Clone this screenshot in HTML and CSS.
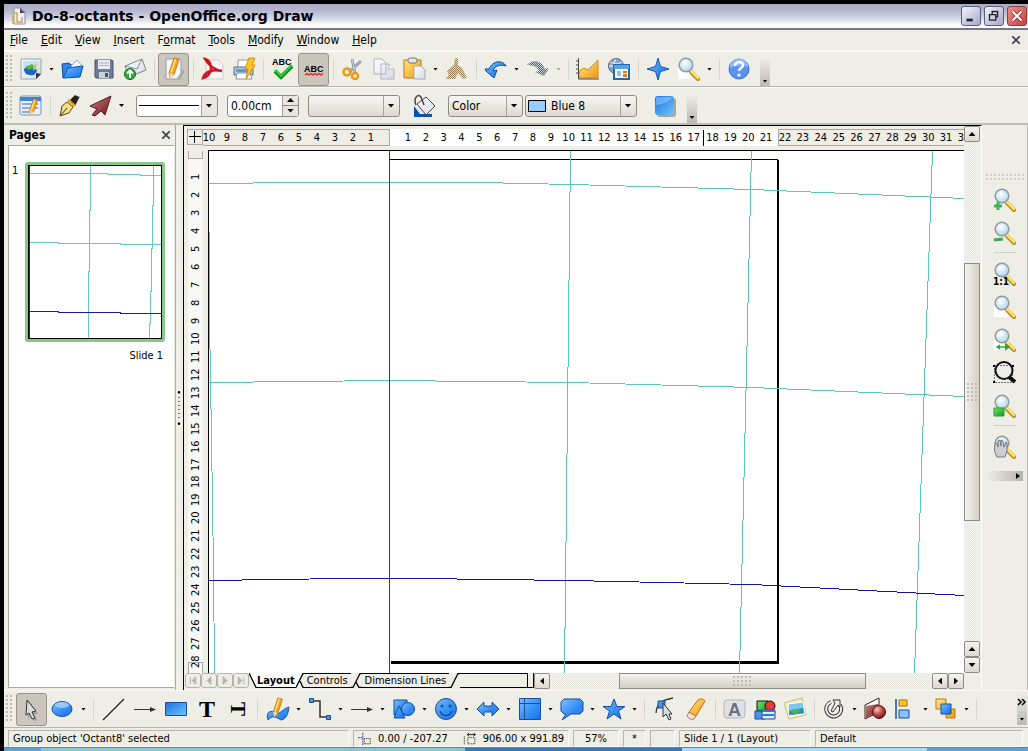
FILE: index.html
```html
<!DOCTYPE html>
<html lang="en">
<head>
<meta charset="utf-8">
<title>Do-8-octants - OpenOffice.org Draw</title>
<link rel="stylesheet" href="styles.css">
</head>
<body>
<svg class="defs" aria-hidden="true">
  <defs>
    <linearGradient id="blue" x1="0" y1="0" x2="1" y2="1"><stop offset="0" stop-color="#7fc0ff"/><stop offset=".5" stop-color="#3b93f7"/><stop offset="1" stop-color="#1570e8"/></linearGradient>
    <linearGradient id="rect" x1="0" y1="0" x2="1" y2="1"><stop offset="0" stop-color="#1f6fe0"/><stop offset="1" stop-color="#6fc6ff"/></linearGradient>
    <linearGradient id="gold" x1="0" y1="0" x2="1" y2="1"><stop offset="0" stop-color="#ffe680"/><stop offset="1" stop-color="#f09a10"/></linearGradient>
    <linearGradient id="paper" x1="0" y1="0" x2="1" y2="1"><stop offset="0" stop-color="#ffffff"/><stop offset="1" stop-color="#d6dae6"/></linearGradient>
    <linearGradient id="green" x1="0" y1="0" x2="1" y2="1"><stop offset="0" stop-color="#7be36f"/><stop offset="1" stop-color="#0b9a1a"/></linearGradient>
    <linearGradient id="red" x1="0" y1="0" x2="1" y2="1"><stop offset="0" stop-color="#c88080"/><stop offset="1" stop-color="#6e1414"/></linearGradient>
    <radialGradient id="lens" cx=".4" cy=".35" r=".7"><stop offset="0" stop-color="#ffffff"/><stop offset="1" stop-color="#a9d3e6"/></radialGradient>
    <radialGradient id="ball" cx=".35" cy=".3" r=".8"><stop offset="0" stop-color="#ffc4c4"/><stop offset=".5" stop-color="#c04a4a"/><stop offset="1" stop-color="#5e1010"/></radialGradient>
    <pattern id="dimBrown" width="2" height="2" patternUnits="userSpaceOnUse"><path fill="#9a7f55" d="M0 0h1v1H0zM1 1h1v1H1z"/></pattern>
    <pattern id="dimBlue" width="2" height="2" patternUnits="userSpaceOnUse"><path fill="#34688f" d="M0 0h1v1H0zM1 1h1v1H1z"/></pattern>
    <symbol id="mag" viewBox="0 0 24 24">
      <path d="M14 15l7 7" stroke="#b98a20" stroke-width="4" stroke-linecap="round"/><path d="M14 14l7 7" stroke="#ffe069" stroke-width="2.500" stroke-linecap="round"/>
      <circle cx="9" cy="8" r="6.800" fill="url(#lens)" stroke="#8d9ba3" stroke-width="1.500"/>
    </symbol>
    <symbol id="pencil" viewBox="0 0 24 24"><path d="M9 16L14 1l5 1.500-5 15-4 3.500z" fill="#f9a51c" stroke="#b56a08" stroke-width=".8"/><path d="M11 15.500L15.500 2" stroke="#ffe48c" stroke-width="1.500"/><path d="M9 16l5 1.500-4 4.500z" fill="#f4d6a6"/></symbol>
  </defs>
</svg>
<div class="app">
  <header class="title">
    <svg class="doc-icon" viewBox="0 0 18 18"><path d="M5 1h7l4 4v12H5z" fill="#eef0f4" stroke="#8c93a8"/><path d="M11 1l5 5h-5z" fill="#445"/><path d="M2 6h6v9h5v-5M4 9v8" fill="none" stroke="#d4a84b" stroke-width="1.500"/></svg>
    <h1>Do-8-octants - OpenOffice.org Draw</h1>
    <button class="wb" aria-label="Minimize"><svg viewBox="0 0 20 20"><path d="M5 13h7v3H5z" fill="#223"/></svg></button>
    <button class="wb" aria-label="Restore"><svg viewBox="0 0 20 20"><path d="M8 8V5h6v6h-2M5 8.500h7v6H5z" fill="none" stroke="#223" stroke-width="1.500"/></svg></button>
    <button class="wb close" aria-label="Close"><svg viewBox="0 0 20 20"><path d="M5 5l10 10M15 5L5 15" stroke="#733" stroke-width="4"/><path d="M5 5l10 10M15 5L5 15" stroke="#fff" stroke-width="2.200"/></svg></button>
  </header>
  <nav class="menu">
    <button><u>F</u>ile</button><button><u>E</u>dit</button><button><u>V</u>iew</button><button><u>I</u>nsert</button><button>F<u>o</u>rmat</button><button><u>T</u>ools</button><button><u>M</u>odify</button><button><u>W</u>indow</button><button><u>H</u>elp</button>
    <button class="x" aria-label="Close document"><svg viewBox="0 0 8 8"><path d="M0 0l8 8M8 0L0 8" stroke="#446" stroke-width="1.800"/></svg></button>
  </nav>
  <div class="bar">
    <i class="grip"></i>
    <button class="tb" aria-label="New"><svg viewBox="0 0 24 24"><path d="M2 2h20v15l-5 5H2z" fill="url(#paper)" stroke="#9ba0ad"/><path d="M4 4h16v10H4z" fill="#c4e2f7"/><path d="M5 12c3-3 9-2 13 1-1 4-3 6-7 5-4 0-6-3-6-6z" fill="#1766c4"/><path d="M6 10l7-3 3 3-6 3z" fill="#5bb440"/><path d="M14 10l4-4-1 5-3 3z" fill="#f4b824"/><path d="M17 22l5-5-5-1z" fill="#333"/></svg></button>
    <button class="dd" aria-label="New options"></button>
    <button class="tb" aria-label="Open"><svg viewBox="0 0 24 24"><path d="M2 21L1 7l7-1 2 2h10l1 4" fill="#3585e6" stroke="#0c4fa8"/><path d="M10 9l6-6 6 7-8 8z" fill="#f3f8ff" stroke="#8da5c8"/><path d="M2 21l5-10 15-2-3 11z" fill="url(#blue)" stroke="#0c4fa8"/></svg></button>
    <button class="tb" aria-label="Save"><svg viewBox="0 0 24 24"><path d="M3 3h17l1 1v17H4l-1-1z" fill="#6e7b95" stroke="#465168"/><path d="M6 3h12v9H6z" fill="#e8ebf3"/><path d="M7 6h10M7 8.500h10" stroke="#a9b1c4"/><path d="M7 15h10v6H7z" fill="#c9cfdb"/><path d="M13 16h3v4h-3z" fill="#465168"/></svg></button>
    <button class="tb" aria-label="E-mail"><svg viewBox="0 0 24 24"><path d="M2 9l17-7 4 11-17 7z" fill="url(#paper)" stroke="#7d8292"/><path d="M2 9l12 3 5-10" fill="none" stroke="#8a90a2"/><circle cx="7" cy="17" r="5.500" fill="#2fae36" stroke="#0c7614"/><path d="M7 21v-7M4 16.500l3-3 3 3" fill="none" stroke="#fff" stroke-width="2"/></svg></button>
    <i class="sep"></i>
    <button class="tb on" aria-label="Edit file"><svg viewBox="0 0 24 24"><path d="M4 2h15v20H4z" fill="#f4f5fa" stroke="#9499aa"/><path d="M15 21l7-9v4l-5 6z" fill="#a9a49d"/><use href="#pencil" x="-2" width="24" height="24"/></svg></button>
    <i class="sep"></i>
    <button class="tb" aria-label="Export PDF"><svg viewBox="0 0 24 24"><path d="M5 3h12l5 5v14H5z" fill="#f8f5f5" stroke="#d5c9c9"/><path d="M4 2c5 1 6 7 6 11-1 4-4 7-8 8 2-6 8-9 19-7-6-1-13-5-17-12z" fill="none" stroke="#d3131c" stroke-width="2.500"/></svg></button>
    <button class="tb" aria-label="Print"><svg viewBox="0 0 24 24"><path d="M6 3h11v8H6z" fill="#fff" stroke="#8c93a3"/><path d="M2 10h19v8H2z" fill="#b9c8dd" stroke="#5d6f8c"/><path d="M4 12h13v3H4z" fill="#3fa6e6"/><path d="M5 16h13l2 6H4z" fill="#fff" stroke="#8c93a3"/><path d="M17 1h6l-3 7h3l-9 14 2-10h-3z" fill="#ffc62a" stroke="#e08c00"/></svg></button>
    <i class="sep"></i>
    <button class="tb" aria-label="Spellcheck"><svg viewBox="0 0 24 24"><text class="abc" x="1" y="8">ABC</text><path d="M4 14l6 6L21 9" fill="none" stroke="#078a14" stroke-width="4"/><path d="M4 13l6 6L21 8" fill="none" stroke="#33cc3c" stroke-width="2"/></svg></button>
    <button class="tb on" aria-label="AutoSpellcheck"><svg viewBox="0 0 24 24"><text class="abc" x="2" y="15">ABC</text><path d="M3 18l2-1.500 2 1.500 2-1.500 2 1.500 2-1.500 2 1.500 2-1.500 2 1.500 2-1.500" fill="none" stroke="#e01818" stroke-width="1.200"/></svg></button>
    <i class="sep"></i>
    <button class="tb" aria-label="Cut"><svg viewBox="0 0 24 24"><path d="M11 2l3 14M20 4L8 15" stroke="#7c8698" stroke-width="2.500"/><path d="M11 2l3 14M20 4L8 15" stroke="#d5dbe6"/><circle cx="6" cy="15" r="3.500" fill="none" stroke="#e89a10" stroke-width="2.500"/><circle cx="14" cy="19" r="3" fill="none" stroke="#e89a10" stroke-width="2.500"/></svg></button>
    <button class="tb" aria-label="Copy"><svg viewBox="0 0 24 24"><path d="M2 2h8l4 4v11H2zM9 7h8l5 5v10H9z" fill="url(#paper)" stroke="#b0b4c0"/><path d="M17 7v5h5" fill="#fff" stroke="#b0b4c0"/></svg></button>
    <button class="tb" aria-label="Paste"><svg viewBox="0 0 24 24"><path d="M1 3h17v18H1z" fill="url(#gold)" stroke="#b97a10"/><rect x="5" y="1" width="9" height="5" rx="2" fill="#e5e5ea" stroke="#777"/><path d="M11 9h7l4 4v9H11z" fill="url(#paper)" stroke="#a2a7b8"/></svg></button>
    <button class="dd" aria-label="Paste options"></button>
    <button class="tb" aria-label="Format paintbrush"><svg viewBox="0 0 24 24"><path d="M10 1h3v7l4 3 5 10-4 1-5-6-3 6H1l3-5-2-3 7-6z" fill="#dfd6c6"/><path d="M10 1h3v7l4 3 5 10-4 1-5-6-3 6H1l3-5-2-3 7-6z" fill="url(#dimBrown)"/></svg></button>
    <i class="sep"></i>
    <button class="tb" aria-label="Undo"><svg viewBox="0 0 24 24"><path d="M1 12l1 2 8 7 3-8-4 1c1-5 7-7 13-5C19 3 9 3 5 12z" fill="url(#blue)" stroke="#0b4b9c"/></svg></button>
    <button class="dd" aria-label="Undo list"></button>
    <button class="tb" aria-label="Redo"><svg viewBox="0 0 24 24"><path d="M23 11l-5 8-9-4 4-1c-1-4-6-6-12-6C6 2 15 3 19 12z" fill="#c8d6de"/><path d="M23 11l-5 8-9-4 4-1c-1-4-6-6-12-6C6 2 15 3 19 12z" fill="url(#dimBlue)"/></svg></button>
    <button class="dd dim" aria-label="Redo list"></button>
    <i class="sep"></i>
    <button class="tb" aria-label="Chart"><svg viewBox="0 0 24 24"><path d="M3 21v-7l5-3 4 2L22 3v18z" fill="url(#gold)" stroke="#d98a10"/><path d="M2.500 1v21H23M0 4h3M0 8h3M0 12h3M0 16h3" fill="none" stroke="#4b4b4b"/></svg></button>
    <button class="tb" aria-label="Hyperlink"><svg viewBox="0 0 24 24"><circle cx="9" cy="9" r="7.500" fill="#8ea2bf" stroke="#4f6284"/><path d="M2 9h14M9 2c-4 5-4 9 0 14M3 5c4 2 9 2 12 0" fill="none" stroke="#d6dfec" stroke-width="1.300"/><path d="M7 8h15v14H7z" fill="#fff" stroke="#1f66b8" stroke-width="2"/><path d="M7 8h15v4H7z" fill="#53a4f0"/><path d="M10 14h4v5h-4z" fill="#8fc1ee"/><path d="M16 14h4v2h-4zM16 17h4v3h-4z" fill="#e87722"/></svg></button>
    <i class="sep"></i>
    <button class="tb" aria-label="Navigator"><svg viewBox="0 0 24 24"><path d="M12 1l2.500 8.500L23 12l-8.500 2.500L12 23l-2.500-8.500L1 12l8.500-2.500z" fill="url(#blue)" stroke="#1458a8"/></svg></button>
    <button class="tb" aria-label="Zoom"><svg viewBox="0 0 24 24"><path d="M1 12h13v10H1z" fill="#fbfbfb"/><use href="#mag" width="24" height="24"/></svg></button>
    <button class="dd" aria-label="Zoom options"></button>
    <i class="sep"></i>
    <button class="tb" aria-label="Help"><svg viewBox="0 0 24 24"><circle cx="12" cy="12" r="10" fill="#5b93f2" stroke="#3c6fd2"/><path d="M3 11a9 9 0 0 1 18-1c-5-2-12-2-18 1z" fill="#94bcfa"/><path d="M8 9c0-5 8-5 8-1 0 3-4 3-4 6" fill="none" stroke="#fff" stroke-width="2.500"/><circle cx="12" cy="18" r="1.600" fill="#fff"/></svg></button>
    <button class="more" aria-label="More"></button>
  </div>
  <div class="bar two">
    <i class="grip"></i>
    <button class="tb" aria-label="Styles"><svg viewBox="0 0 24 24"><rect x="1" y="2" width="21" height="19" rx="2" fill="#e9eef8" stroke="#8091b0"/><path d="M1 3h21v4H1z" fill="#3b84dc"/><path d="M3 10h16M3 14h16M3 18h9" stroke="#8badde" stroke-width="2"/><use href="#pencil" x="3" y="4" width="20" height="19"/></svg></button>
    <i class="sep"></i>
    <button class="tb" aria-label="Line"><svg viewBox="0 0 24 24"><path d="M12 6l5-5 4 2 1-1-5 10z" fill="#222"/><path d="M2 22l2-10 5-4 6 5-4 6z" fill="#f7dc80" stroke="#5d4a18"/><path d="M3 21l6-7" stroke="#333"/><path d="M10 6l7 6" stroke="#e2a718" stroke-width="2.500"/></svg></button>
    <button class="tb" aria-label="Arrow style"><svg viewBox="0 0 24 24"><path d="M22 2L1 12l7 3-5 6 3 1 6-5 4 4z" fill="url(#red)" stroke="#5d1b1b"/></svg></button>
    <button class="dd" aria-label="Arrow styles"></button>
    <div class="combo line"><span class="stroke"></span><select aria-label="Line style"><option></option></select></div>
    <div class="spin"><input type="text" value="0.00cm" aria-label="Line width"><div><button aria-label="Increase"></button><button class="down" aria-label="Decrease"></button></div></div>
    <div class="combo lcolor"><select aria-label="Line color"><option></option></select></div>
    <button class="tb bucket" aria-label="Area"><svg viewBox="0 0 24 24"><path d="M1 12v11h18v-3H7z" fill="#0d50b8"/><path d="M4 10l9-7 9 9-9 9z" fill="url(#paper)" stroke="#444"/><path d="M3 11C0 4 5-1 8 3l3 8" fill="none" stroke="#444" stroke-width="1.500"/></svg></button>
    <div class="combo fill"><select aria-label="Fill type"><option>Color</option></select></div>
    <div class="combo fcolor"><span class="swatch"></span><select aria-label="Fill color"><option>Blue 8</option></select></div>
    <button class="tb shadow" aria-label="Shadow"><svg viewBox="0 0 24 24"><rect x="4" y="4" width="19" height="19" rx="3" fill="#aaa69e"/><rect x="2" y="2" width="19" height="19" rx="3" fill="url(#rect)"/><path d="M3 3h16c-3 5-8 7-16 8z" fill="#8fc8ff" opacity=".6"/></svg></button>
    <button class="more second" aria-label="More"></button>
  </div>
  <main>
    <aside class="pages">
      <header><h2>Pages</h2><button class="x" aria-label="Close pages"><svg viewBox="0 0 8 8"><path d="M0 0l8 8M8 0L0 8" stroke="#445" stroke-width="1.800"/></svg></button></header>
      <div class="list">
        <span>1</span>
        <figure>
          <svg class="thumb" viewBox="0 0 134 174" preserveAspectRatio="none" shape-rendering="crispEdges" fill="none"><rect width="134" height="174" fill="#fff"/><g stroke="#66c8c0"><path d="M0 8.500h79v1h33v1h22M0 77.500h30v1h62v1h42M62.500 0v45h-1v61h-1v68M125.500 0v40h-1v43h-1v43h-1v32h-1v16"/></g><path d="M0 146.500h30v1h62v1h42" stroke="#1c1c9c"/><path d="M1.500 0v174" stroke="#402050"/></svg>
          <figcaption>Slide 1</figcaption>
        </figure>
      </div>
    </aside>
    <div class="split"><svg viewBox="0 0 4 36"><path d="M1 3l1-2 1 2zM1 33l1 2 1-2z" fill="#000" stroke="#000"/><path d="M2 7v24" stroke="#000" stroke-dasharray="1 3"/></svg></div>
    <section class="doc">
      <div class="corner"><svg viewBox="0 0 14 14"><path d="M1 6.500h12M6.500 1v12" stroke="#000"/></svg></div>
      <div class="hruler">
        <div class="neg"><span>10</span><span>9</span><span>8</span><span>7</span><span>6</span><span>5</span><span>4</span><span>3</span><span>2</span><span>1</span></div>
        <div class="pos"><span>1</span><span>2</span><span>3</span><span>4</span><span>5</span><span>6</span><span>7</span><span>8</span><span>9</span><span>10</span><span>11</span><span>12</span><span>13</span><span>14</span><span>15</span><span>16</span><span>17</span><span class="mark">18</span><span>19</span><span>20</span><span>21</span></div>
        <div class="beyond"><span>22</span><span>23</span><span>24</span><span>25</span><span>26</span><span>27</span><span>28</span><span>29</span><span>30</span><span>31</span><span>32</span></div>
      </div>
      <div class="vruler">
        <i></i>
        <div><span>1</span><span>2</span><span>3</span><span>4</span><span>5</span><span>6</span><span>7</span><span>8</span><span>9</span><span>10</span><span>11</span><span>12</span><span>13</span><span>14</span><span>15</span><span>16</span><span>17</span><span>18</span><span>19</span><span>20</span><span>21</span><span>22</span><span>23</span><span>24</span><span>25</span><span>26</span><span>27</span><span>28</span></div>
      </div>
      <div class="canvas">
        <svg shape-rendering="crispEdges" fill="none" aria-label="Drawing page">
          <path d="M181 8.500h388" stroke="#000"/><path d="M569 9v503" stroke="#000" stroke-width="2"/><path d="M182 511h388" stroke="#000" stroke-width="3"/>
          <g stroke="#5cc6be"><path d="M0 32.500L90 31.500H271L362 33.500 543 38.500 755 47.500M0 231.500L90 230.500 181 229.500 271 230.500 362 231.500 543 236.500 755 245.500M361.500 0L355.500 522M542.500 0L530.500 522M723.500 0L705.500 522M.5 81v86l2 120 2 130 1 105"/></g>
          <path d="M0 429.500L135 427.500H210L362 429.500 543 433.500 755 444.500" stroke="#14149a"/>
          <path d="M180.500 0v522" stroke="#562a68"/>
        </svg>
      </div>
      <div class="vscroll"><button class="sb up" aria-label="Scroll up"></button><div class="track"><div class="knob"></div></div><button class="sb up" aria-label="Previous page"></button><button class="sb down" aria-label="Scroll down"></button></div>
      <div class="tabs">
        <button class="nav" aria-label="First"><svg viewBox="0 0 14 14"><path d="M4 3v8M10 3v8L6 7z"/></svg></button><button class="nav" aria-label="Previous"><svg viewBox="0 0 14 14"><path d="M9 3v8L5 7z"/></svg></button><button class="nav" aria-label="Next"><svg viewBox="0 0 14 14"><path d="M5 3v8l4-4z"/></svg></button><button class="nav" aria-label="Last"><svg viewBox="0 0 14 14"><path d="M4 3v8l4-4zM10 3v8"/></svg></button>
        <svg class="slant" viewBox="0 0 8 15"><path d="M0 0h8v15z" fill="#fff"/><path d="M0 0l7 14.500h1" fill="none" stroke="#000" stroke-width="1.300"/></svg>
        <button class="tab active">Layout</button>
        <svg class="slant" viewBox="0 0 8 15"><path d="M0 0h7L0 15z" fill="#fff"/><path d="M0 14.500L7 .5h1M4 8l3 6.500h1" fill="none" stroke="#000" stroke-width="1.300"/></svg>
        <button class="tab">Controls</button>
        <svg class="slant wide" viewBox="0 0 11 15"><path d="M0 14.500h2L9 .5h2M5 9l3 5.500h3" fill="none" stroke="#000" stroke-width="1.300"/></svg>
        <button class="tab">Dimension Lines</button>
        <svg class="slant wide" viewBox="0 0 11 15"><path d="M0 14.500h2L9 .5h2" fill="none" stroke="#000" stroke-width="1.300"/></svg>
        <i class="rest"></i><i class="handle"></i>
        <button class="sb left" aria-label="Scroll left"></button>
        <div class="track"><div class="knob"></div></div>
        <button class="sb left" aria-label="Scroll left"></button><button class="sb right" aria-label="Scroll right"></button>
      </div>
    </section>
    <div class="side">
      <i class="hgrip"></i>
      <button aria-label="Zoom in"><svg viewBox="0 0 24 24"><use href="#mag" width="24" height="24"/><path d="M5 14v8M1 18h8" stroke="#42b653" stroke-width="3"/></svg></button>
      <button aria-label="Zoom out"><svg viewBox="0 0 24 24"><use href="#mag" width="24" height="24"/><path d="M1 19l9-1" stroke="#42a353" stroke-width="3"/></svg></button>
      <hr>
      <button aria-label="Zoom 100%"><svg viewBox="0 0 24 24"><use href="#mag" width="24" height="24"/><text class="one" x="0" y="23">1:1</text></svg></button>
      <button aria-label="Entire page"><svg viewBox="0 0 24 24"><path d="M1 10h14v12H1z" fill="#fff"/><use href="#mag" width="24" height="24"/></svg></button>
      <button aria-label="Page width"><svg viewBox="0 0 24 24"><path d="M1 12h14v10H1z" fill="#fff"/><use href="#mag" width="24" height="24"/><path d="M4 19h11M7 17l-3 2 3 2M12 16l4 3-4 3" fill="#28ad31" stroke="#28ad31" stroke-width="1.500"/></svg></button>
      <button aria-label="Zoom selection"><svg viewBox="0 0 24 24"><path d="M16 16l6 5" stroke="#111" stroke-width="4"/><circle cx="11" cy="9.500" r="8.500" fill="#ececec" stroke="#111" stroke-width="2"/><path d="M1.500 4.500h18v17h-18z" fill="none" stroke="#000" stroke-dasharray="1 2"/><path d="M0 4h2v2H0zM19 4h2v2h-2zM0 20h2v2H0z" fill="#000"/></svg></button>
      <button aria-label="Object zoom"><svg viewBox="0 0 24 24"><use href="#mag" width="24" height="24"/><path d="M1 14h10v8H1z" fill="url(#green)" stroke="#26a233"/></svg></button>
      <hr>
      <button aria-label="Shift"><svg viewBox="0 0 24 24"><use href="#mag" width="24" height="24"/><path d="M4 22c-3-6-3-7-2-13l2-1 1 4V6l2-1 1 6V5l2 1 1 6 2-5 1 1v8l-2 6z" fill="#cccdd1" stroke="#74777f"/></svg></button>
      <button class="more flat" aria-label="More"></button>
    </div>
  </main>
  <div class="bar draw">
    <i class="grip"></i>
    <button class="tb on" aria-label="Select"><svg viewBox="0 0 24 24"><path d="M9 4l9 13h-4l3 6-3 1-3-6-3 3z" fill="#8f8b85" opacity=".7"/><path d="M7 3l9 11-4 1 3 6-3 1-3-6-3 2z" fill="#d9dbe2" stroke="#333"/></svg></button>
    <button class="tb" aria-label="Ellipse"><svg viewBox="0 0 24 24"><ellipse cx="11" cy="12" rx="10" ry="7.500" fill="url(#blue)" stroke="#1d4f94"/><ellipse cx="11" cy="8" rx="7" ry="3" fill="#b7dcff" opacity=".7"/></svg></button>
    <button class="dd" aria-label="Ellipse options"></button>
    <i class="sep"></i>
    <button class="tb" aria-label="Line"><svg viewBox="0 0 24 24"><path d="M1 23L22 2" stroke="#222" stroke-width="1.300"/></svg></button>
    <button class="tb" aria-label="Arrow line"><svg viewBox="0 0 24 24"><path d="M1 12.500h17" stroke="#333"/><path d="M17 10l6 2.500-6 2.500z" fill="#333"/></svg></button>
    <button class="tb" aria-label="Rectangle"><svg viewBox="0 0 24 24"><path d="M1.500 5.500h21v13h-21z" fill="url(#rect)" stroke="#1c4d96"/></svg></button>
    <button class="tb" aria-label="Text"><svg viewBox="0 0 24 24"><text class="big" x="4" y="20">T</text></svg></button>
    <button class="tb" aria-label="Vertical text"><svg viewBox="0 0 24 24"><text class="big small" x="5" y="19" transform="rotate(90 12 12)">T</text></svg></button>
    <i class="sep"></i>
    <button class="tb" aria-label="Curve"><svg viewBox="0 0 24 24"><path d="M2 23c-3-9 4-10 8-7 4 2 6-4 13-6-1 8-3 12-8 13-5-3-9-5-13 0z" fill="url(#blue)" stroke="#145cad"/><use href="#pencil" x="-1" width="22" height="22"/></svg></button>
    <button class="dd" aria-label="Curve options"></button>
    <button class="tb" aria-label="Connector"><svg viewBox="0 0 24 24"><path d="M5 4h7v16h6" fill="none" stroke="#333" stroke-width="1.500"/><path d="M1.500 1.500h4v4h-4zM18.500 18.500h4v4h-4z" fill="#4b95e8" stroke="#174f99"/></svg></button>
    <button class="dd" aria-label="Connector options"></button>
    <button class="tb" aria-label="Lines and arrows"><svg viewBox="0 0 24 24"><path d="M1 12.500h17" stroke="#333"/><path d="M17 10l6 2.500-6 2.500z" fill="#333"/></svg></button>
    <button class="dd" aria-label="Arrow options"></button>
    <button class="tb" aria-label="Basic shapes"><svg viewBox="0 0 24 24"><g fill="url(#blue)" stroke="#174f99"><path d="M2 3h13v15H2z"/><circle cx="16" cy="12" r="6.500"/><path d="M2 21l5-12 6 12z"/></g></svg></button>
    <button class="dd" aria-label="Shape options"></button>
    <button class="tb" aria-label="Symbol shapes"><svg viewBox="0 0 24 24"><circle cx="12" cy="12" r="10.500" fill="url(#blue)" stroke="#174f99"/><path d="M6 14c2 6 10 6 12 0" fill="none" stroke="#174f99" stroke-width="1.500"/><circle cx="8" cy="9" r="1.500" fill="#174f99"/><circle cx="16" cy="9" r="1.500" fill="#174f99"/></svg></button>
    <button class="dd" aria-label="Symbol options"></button>
    <button class="tb" aria-label="Block arrows"><svg viewBox="0 0 24 24"><path d="M1 12l7-7v4h8V5l7 7-7 7v-4H8v4z" fill="url(#blue)" stroke="#174f99"/></svg></button>
    <button class="dd" aria-label="Block arrow options"></button>
    <button class="tb" aria-label="Flowchart"><svg viewBox="0 0 24 24"><path d="M1.500 1.500h21v21h-21zM1.500 6.500h21M6.500 1.500v21" fill="url(#blue)" stroke="#174f99"/></svg></button>
    <button class="dd" aria-label="Flowchart options"></button>
    <button class="tb" aria-label="Callouts"><svg viewBox="0 0 24 24"><path d="M4 2h16l3 3v9l-3 3h-9l-9 6 4-6H4l-3-3V5z" fill="url(#blue)" stroke="#174f99"/></svg></button>
    <button class="dd" aria-label="Callout options"></button>
    <button class="tb" aria-label="Stars"><svg viewBox="0 0 24 24"><path d="M12 2l3 7.500h8L16.500 14l2.500 8-7-5-7 5 2.500-8L1 9.500h8z" fill="url(#blue)" stroke="#174f99"/></svg></button>
    <button class="dd" aria-label="Star options"></button>
    <i class="sep"></i>
    <button class="tb" aria-label="Points"><svg viewBox="0 0 24 24"><path d="M3 16C4 5 10 3 20 1" fill="none" stroke="#333" stroke-width="1.300"/><path d="M5 4h7v7H5z" fill="#4b95e8" stroke="#174f99"/><path d="M10 6l9 11h-3l2 5-2 1-3-6-3 3z" fill="#d9dbe2" stroke="#333"/></svg></button>
    <button class="tb" aria-label="Glue points"><svg viewBox="0 0 24 24"><path d="M14 3c3-2 6-1 7 1L12 19 5 15z" fill="url(#gold)" stroke="#c66b0c"/><path d="M5 15l7 4-2 3c-3 1-6-1-7-3z" fill="#f4e0c8" stroke="#9b7b60"/></svg></button>
    <i class="sep"></i>
    <div class="tight">
      <button class="tb" aria-label="Fontwork"><svg viewBox="0 0 24 24"><rect x="1" y="3" width="21" height="18" rx="3" fill="#dfe1e8" stroke="#b1b4c0"/><text class="fw" x="5" y="19">A</text></svg></button>
      <button class="tb" aria-label="From file"><svg viewBox="0 0 24 24"><path d="M4 4h11v10H4z" fill="url(#green)" stroke="#111"/><circle cx="17" cy="9" r="5" fill="#e23a35" stroke="#111"/><path d="M2 14h10v8H2z" fill="#4b95e8" stroke="#124a9c"/><path d="M9 13h13v9H9z" fill="#dcecff" stroke="#124a9c"/><path d="M9 14h13M10 18h11" stroke="#2e78d4" stroke-width="2"/></svg></button>
      <button class="tb" aria-label="Gallery"><svg viewBox="0 0 24 24"><path d="M1 6l18-5 4 17-17 4z" fill="#f4efb4" stroke="#c9bf83"/><path d="M5 7l15-2 2 12-16 2z" fill="#76c8ef" stroke="#fff"/><path d="M6 14l14-3 1 5-15 2z" fill="#278cb8"/><path d="M7 14c6-5 8 1 13-1l-8 4z" fill="#52b34c"/></svg></button>
      <i class="sep"></i>
      <button class="tb" aria-label="Rotate"><svg viewBox="0 0 24 24"><path d="M9 5a7.500 7.500 0 1 0 9 3" fill="none" stroke="#333" stroke-width="4"/><path d="M9 5a7.500 7.500 0 1 0 9 3" fill="none" stroke="#eee" stroke-width="2"/><path d="M11 3h7v7l-2-2-5 7-2-1 4-8z" fill="#eee" stroke="#333"/></svg></button>
      <button class="dd" aria-label="Rotate options"></button>
      <button class="tb" aria-label="Extrusion"><svg viewBox="0 0 24 24"><path d="M2 8l14-7v14L2 22z" fill="#fff" stroke="#222"/><path d="M3 9l12-2v8L3 21z" fill="url(#red)"/><circle cx="16" cy="15" r="6.500" fill="url(#ball)" stroke="#511"/></svg></button>
      <button class="tb" aria-label="Align"><svg viewBox="0 0 24 24"><path d="M3 2v20" stroke="#174ca0" stroke-width="1.500"/><path d="M6 3h8v6H6z" fill="#ffc52e" stroke="#a56c00"/><path d="M6 13h10v8H6z" fill="#85c3ff" stroke="#174ca0"/></svg></button>
      <button class="dd" aria-label="Align options"></button>
      <button class="tb" aria-label="Arrange"><svg viewBox="0 0 24 24"><path d="M2 2h10v10H2zM12 12h9v9h-9z" fill="url(#gold)" stroke="#b97a10"/><path d="M7 7h10v10H7z" fill="url(#blue)" stroke="#174f99"/></svg></button>
      <button class="dd" aria-label="Arrange options"></button>
      <i class="sep"></i>
    </div>
    <button class="more end" aria-label="More"><svg viewBox="0 0 10 8"><path d="M1 1l3 3-3 3M5 1l3 3-3 3" fill="none" stroke="#000" stroke-width="1.500"/></svg></button>
  </div>
  <footer class="status">
    <span class="msg">Group object 'Octant8' selected</span>
    <span class="pos-size"><svg viewBox="0 0 16 14"><path d="M0 5.500h6M5.500 0v14" stroke="#22a" stroke-dasharray="2 1"/><path d="M7 6.500h7v6H7z" fill="none" stroke="#000" stroke-dasharray="1 1"/></svg><b>0.00 / -207.27</b><svg viewBox="0 0 16 14"><path d="M5.500 5.500h8v7h-8zM1.500 4v9" fill="none" stroke="#000" stroke-dasharray="1 1"/><path d="M5 2h9M7 0L5 2l2 2M12 0l2 2-2 2" stroke="#000" fill="none"/></svg><b>906.00 x 991.89</b></span>
    <span class="zoom">57%</span><span class="star">*</span><span class="sign"></span><span class="slide">Slide 1 / 1 (Layout)</span><span class="style">Default</span>
  </footer>
  <div class="desk"><i></i><i></i><i></i><i></i><i></i></div>
</div>
</body>
</html>
```

FILE: styles.css
```css
* { box-sizing: border-box; }
body {
  margin: 0;
  background: #000;
  color: #000;
  font: 12px/14px "DejaVu Sans Condensed", "DejaVu Sans", sans-serif;
}
button, input, select { font: inherit; color: inherit; margin: 0; padding: 0; border: 0; background: none; }
button { display: block; }
svg { display: block; }
.defs { width: 0; height: 0; position: absolute; }
.app {
  height: 100vh;
  padding: 4px 0 0 4px;
  display: grid;
  grid-template-columns: minmax(0, 1fr);
  grid-template-rows: 26px 21px 36px 38px minmax(0, 1fr) 38px 19px 4px;
  background: linear-gradient(#000, #000) 0 0 / 100% 4px no-repeat, linear-gradient(#000, #000) 0 0 / 4px 100% no-repeat, #eeeee6;
}

/* title bar */
.title {
  display: flex;
  align-items: center;
  gap: 3px;
  padding: 0 1px 0 5px;
  background: linear-gradient(#aaaac6, #b4b4ce 25%, #dcdce8 65%, #fff 88%, #fff);
  border-bottom: 2px solid #77788a;
}
.title h1 { flex: 1; margin: 0 0 0 2px; font: bold 14px/22px "DejaVu Sans", sans-serif; }
.doc-icon { width: 18px; height: 18px; }
.wb { width: 20px; height: 20px; border: 1px solid #5c5c80; border-radius: 3px; background: linear-gradient(135deg, #f5f5fa, #a7a7c8); }
.wb.close { background: linear-gradient(135deg, #e9908c, #c9403e); border-color: #8c4040; }

/* menu */
.menu { display: flex; align-items: center; gap: 13px; padding: 0 8px 0 6px; border-bottom: 1px solid #f8f8f4; }
.x { width: 8px; height: 8px; margin-left: auto; }

/* toolbars */
.bar { display: flex; align-items: center; border-bottom: 1px solid #b5b5ac; border-top: 1px solid #f8f8f4; }
.two { border-bottom: 2px solid #bdbdb5; }
.grip { width: 7px; height: 28px; margin: 0 2px; background: radial-gradient(circle at 1px 1px, #bcbcb4 1px, transparent 1px) 0 0 / 4px 4px; }
.draw .grip { margin-right: 3px; }
.tb { width: 31px; height: 33px; flex: none; border-radius: 3px; }
.tb svg { width: 24px; height: 24px; margin: auto; overflow: visible; }
.on { background: #cbc6bd; border: 1px solid #9a958c; }
.dd { width: 11px; height: 30px; flex: none; }
.dd::after, .combo::after, .more::after { content: ""; display: block; margin: auto; width: 5px; height: 3px; background: #000; clip-path: polygon(0 0, 100% 0, 50% 100%); }
.dim::after { background: #aaa; }
.sep { width: 8px; height: 20px; flex: none; background: linear-gradient(#d6d6ce, #d6d6ce) 4px 0 / 1px 100% no-repeat; }
.draw .sep { width: 9px; }
.more { width: 10px; height: 29px; margin: 6px 0 0 6px; flex: none; background: linear-gradient(#eeeee6, #b9b9b2); padding-top: 18px; }
.abc { font: bold 9px "Liberation Sans", sans-serif; }
.big { font: bold 24px "Liberation Serif", serif; }
.big.small { font-size: 21px; }
.fw { font: bold 18px "Liberation Sans", sans-serif; fill: #6e7079; }
.one { font: bold 10px "DejaVu Sans Condensed", "DejaVu Sans", sans-serif; }
.combo { height: 22px; flex: none; display: grid; grid-template-columns: minmax(0, 1fr) 16px; border: 1px solid #8f8c86; border-radius: 3px; background: linear-gradient(#f8f6f3, #ded9d2); align-items: center; }
.combo::after { grid-area: 1 / 2; width: 7px; height: 4px; }
.combo select { grid-area: 1 / 1 / 2 / 3; width: 100%; height: 20px; padding-left: 3px; appearance: none; background: linear-gradient(#a5a29c, #a5a29c) calc(100% - 15px) 0 / 1px 100% no-repeat; }
.line { width: 82px; margin-left: 9px; background: linear-gradient(#eae6e0, #eae6e0) 100% 0 / 15px 100% no-repeat, #fff; }
.stroke { grid-area: 1 / 1; height: 1px; margin: 0 2px; background: #000; }
.spin { width: 72px; height: 22px; margin-left: 9px; flex: none; display: grid; grid-template-columns: minmax(0, 1fr) 16px; border: 1px solid #8f8c86; border-radius: 3px; background: #fff; }
.spin input { width: 100%; padding-left: 3px; }
.spin > div { display: grid; grid-template-rows: 1fr 1fr; background: #e8e5df; border-left: 1px solid #a5a29c; }
.spin button { border-bottom: 1px solid #8f8c86; }
.spin button.down { border: 0; }
.spin button::after { content: ""; display: block; margin: auto; width: 7px; height: 4px; background: #000; clip-path: polygon(0 100%, 100% 100%, 50% 0); }
.spin .down::after { clip-path: polygon(0 0, 100% 0, 50% 100%); }
.lcolor { width: 92px; margin-left: 9px; }
.bucket { margin-left: 9px; }
.fill { width: 75px; margin-left: 8px; }
.fcolor { width: 112px; margin-left: 2px; }
.fcolor select { padding-left: 25px; }
.swatch { grid-area: 1 / 1; width: 18px; height: 12px; margin-left: 2px; border: 1px solid #000; background: #99ccff; }
.shadow { margin-left: 12px; }
.second { margin-left: 7px; }

/* work area */
main { display: grid; grid-template-columns: 172px 8px minmax(0, 1fr) 46px; min-height: 0; }
.pages { display: grid; grid-template-rows: 20px minmax(0, 1fr); border-right: 1px solid #a9a9a1; }
.pages header { display: flex; align-items: center; padding: 0 5px; }
.pages h2 { margin: 0; font: bold 12px/14px "DejaVu Sans Condensed", "DejaVu Sans", sans-serif; }
.list { margin: 0 1px 2px 4px; background: #fff; border: 1px solid #a9a9a1; border-right: 0; display: grid; grid-template-columns: 16px 140px; align-content: start; padding-top: 16px; font-size: 11px; }
.list > span { padding: 2px 0 0 3px; }
figure { margin: 0; text-align: right; }
.thumb { width: 140px; height: 180px; border: 3px solid #88c888; border-radius: 3px; outline: 1px solid #000; outline-offset: -4px; }
figcaption { padding: 7px 2px 0 0; }
.split { display: grid; align-items: center; border-right: 1px solid #000; }
.split svg { width: 4px; height: 36px; margin-left: 1px; }
.doc { display: grid; grid-template-columns: 24px minmax(0, 1fr) 17px; grid-template-rows: 25px minmax(0, 1fr) 16px; margin-bottom: 1px; border-top: 1px solid #000; min-height: 0; border-right: 1px solid #fff; }
.corner { width: 16px; height: 16px; margin: 3px 0 0 3px; border: 1px solid #a9a9a1; }
.corner svg { width: 14px; height: 14px; }
.hruler { display: flex; margin: 3px 0 5px -5px; font-size: 11px; line-height: 15px; text-align: center; overflow: hidden; min-width: 0; }
.hruler > div { display: flex; flex: none; height: 17px; }
.hruler span { flex: 1; }
.neg { width: 187px; padding-right: 9px; border: 1px solid #a9a9a1; border-left: 0; }
.neg span:first-child, .beyond span:first-child { margin-left: -3px; }
.pos { width: 388px; padding: 1px 3px 0 9px; background: #fff; }
.pos .mark { border-left: 1px solid #000; }
.beyond { width: 196px; border: 1px solid #a9a9a1; }
.vruler { position: relative; overflow: hidden; font-size: 11px; line-height: 15px; margin-left: 4px; width: 15px; background: #f8f8f5; }
.vruler i { display: block; height: 8px; border: 1px solid #a9a9a1; border-top: 0; background: #eeeee6; }
.vruler > div { display: flex; flex-direction: column; height: 503px; margin-top: 9px; }
.vruler span { flex: 1; writing-mode: vertical-rl; transform: rotate(180deg); text-align: center; }
.vruler::after { content: ""; position: absolute; left: 0; right: 0; bottom: 0; height: 10px; border: 1px solid #a9a9a1; border-bottom: 0; }
.canvas { background: #fff; border: solid #000; border-width: 1px 0 0 1px; margin-top: -1px; overflow: hidden; }
.canvas svg { width: 100%; height: 100%; }
.vscroll { grid-area: 1 / 3 / 3 / 4; display: grid; grid-template-rows: 16px minmax(0, 1fr) 16px 16px; width: 16px; }
.track { background: repeating-conic-gradient(#e6e6df 0 25%, #f6f6f3 0 50%) 0 0 / 2px 2px; min-width: 0; }
.vscroll .track { display: grid; grid-template-rows: 121fr 258fr 120fr; }
.knob { grid-row: 2; display: grid; place-items: center; border: 1px solid #8f8c86; background: linear-gradient(90deg, #f5f3f0, #d4cec5); }
.knob::after { content: ""; width: 11px; height: 19px; background: radial-gradient(circle at 1px 1px, #c0bbb3 1px, transparent 1px) 0 0 / 4px 4px; }
.sb { width: 16px; height: 16px; flex: none; border: 1px solid #8f8c86; border-radius: 2px; background: linear-gradient(#f6f4f1, #ddd8d0); }
.sb::after { content: ""; display: block; margin: auto; width: 7px; height: 4px; background: #000; clip-path: polygon(0 100%, 100% 100%, 50% 0); }
.sb.down::after { clip-path: polygon(0 0, 100% 0, 50% 100%); }
.sb.left::after { width: 4px; height: 7px; clip-path: polygon(100% 0, 100% 100%, 0 50%); }
.sb.right::after { width: 4px; height: 7px; clip-path: polygon(0 0, 0 100%, 100% 50%); }
.tabs { grid-area: 3 / 1 / 4 / 3; display: flex; padding-left: 1px; font-size: 11px; line-height: 13px; }
.nav { width: 16px; height: 15px; flex: none; border: 1px solid #b5b2ab; border-radius: 3px; }
.nav svg { width: 14px; height: 13px; fill: #b5b2ab; stroke: #b5b2ab; }
.slant { width: 8px; height: 15px; flex: none; }
.slant.wide { width: 11px; }
.tab { height: 15px; padding: 0 3px; border: solid #000; border-width: 1px 0; flex: none; white-space: nowrap; }
.tab.active { padding: 0 1px 0 0; border-top-color: #fff; background: #fff; font-weight: bold; }
.rest { width: 68px; height: 15px; border: solid #000; border-width: 1px 1px 1px 0; }
.handle { width: 6px; height: 15px; border: solid #000; border-width: 0 1px 1px 0; }
.tabs .track { flex: 1; display: grid; grid-template-columns: 69fr 248fr 66fr; }
.tabs .knob { grid-row: 1; grid-column: 2; background: linear-gradient(#f5f3f0, #d4cec5); }
.tabs .knob::after { width: 19px; height: 11px; }

/* zoom toolbar */
.side { display: flex; flex-direction: column; align-items: center; padding-top: 49px; border-right: 1px solid #b5b5ac; }
.hgrip { width: 38px; height: 6px; margin-bottom: 3px; background: radial-gradient(circle at 1px 1px, #d0d0c8 1px, transparent 1px) 0 0 / 4px 4px; }
.side button { height: 33px; }
.side button svg { width: 24px; height: 24px; margin: auto; }
.side hr { width: 22px; margin: 3px 0 4px; border: 0; border-top: 1px solid #cfcfc6; }
.side .flat { width: 37px; height: 10px; margin: 8px 0 0; padding: 0 3px 0 0; background: linear-gradient(90deg, #eeeee6, #b5b5ae); }
.flat::after { width: 4px; height: 6px; margin: 0 0 0 auto; clip-path: polygon(0 0, 0 100%, 100% 50%); }

/* drawing toolbar */
.tight { display: flex; align-items: center; }
.tight .tb { width: 30px; }
.draw .end { height: 32px; margin: 0 1px 0 auto; padding-top: 0; }
.end svg { width: 10px; height: 8px; margin-bottom: 12px; }

/* status bar */
.status { display: flex; gap: 4px; padding: 2px 5px 0 4px; }
.status span { border: 1px solid #b5b5ac; border-color: #b5b5ac #fafaf6 #fafaf6 #b5b5ac; padding: 0 4px; line-height: 15px; flex: none; white-space: nowrap; font-size: 11px; }
.status b { font-weight: normal; }
.status .msg { width: 341px; }
.status .pos-size { width: 216px; display: flex; align-items: center; gap: 6px; }
.pos-size svg { width: 14px; height: 14px; }
.pos-size svg + b { margin-right: auto; }
.pos-size b:last-child { margin: 0; }
.status .zoom { width: 46px; text-align: center; }
.status .star { width: 23px; text-align: center; }
.status .sign { width: 25px; }
.status .slide { width: 132px; }
.status .style { flex: 1; }
.desk { display: grid; grid-template-columns: 37fr 424fr 217fr 245fr 101fr; border-top: 1px solid #5a86a8; }
.desk i { background: #62a0d0; }
.desk i:nth-child(2) { background: #8cc4d0; }
.desk i:nth-child(3) { background: #3c78b0; }
.desk i:nth-child(4) { background: #a8dcfa; }
```
